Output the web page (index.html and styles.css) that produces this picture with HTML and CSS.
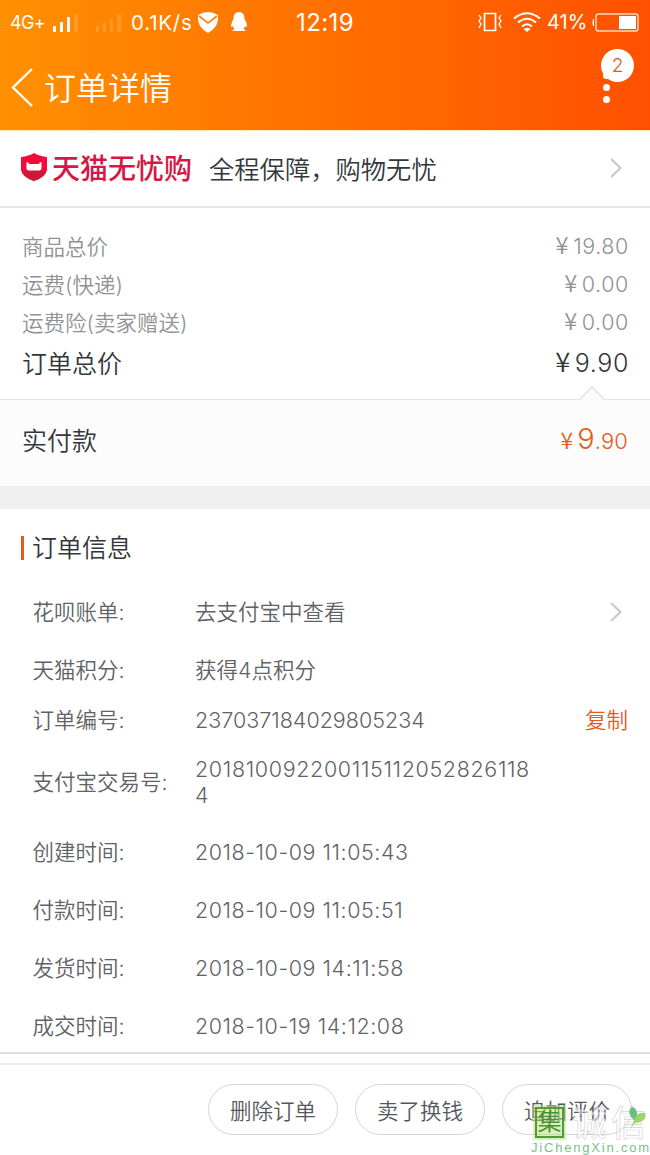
FILE: index.html
```html
<!DOCTYPE html>
<html lang="zh-CN">

<head>
    <meta charset="UTF-8">
    <title>订单详情</title>
    <link rel="stylesheet" href="styles.css">
</head>

<body>
    <div class="header">
        <div class="status-bar">
            <span class="network">4G+</span>
            <svg class="signal" width="68" height="18" viewBox="0 0 68 18" fill="#fff">
                <path d="M0 12h3v6H0zM7 8h3v10H7zM14 3h3v15h-3z" />
                <path d="M21 0h4v18h-4zM43 12h3v6h-3zM50 9h3v9h-3zM57 5h3v13h-3zM64 0h4v18h-4z" opacity="0.15" />
            </svg>
            <span class="speed">0.1K/s</span>
            <svg class="shield" width="20" height="21" viewBox="0 0 20 21">
                <path d="M0 3Q10-3 20 3V8Q19 16 10 21Q1 16 0 8Z" fill="#fff" />
                <path d="M1 4L10 11L19 4" fill="none" stroke="#ff8200" stroke-width="1.6" />
            </svg>
            <svg class="penguin" width="18" height="20" viewBox="0 0 18 20" fill="#fff">
                <path d="M9 0C5 0 3.500 3 3.500 7C2.500 9 1 11 1 14.500Q1.500 15.500 3 14Q3.500 16 4.500 17Q2.500 17.500 2.500 19H15.500Q15.500 17.500 13.500 17Q14.500 16 15 14Q16.500 15.500 17 14.500C17 11 15.500 9 14.500 7C14.500 3 13 0 9 0Z" />
            </svg>
            <span class="clock">12:19</span>
            <svg class="vibrate" width="24" height="20" viewBox="0 0 24 20" fill="none" stroke="#fff" stroke-width="1.7">
                <path d="M6.5 1.5h11v17h-11z" />
                <path d="M1 3l2 3-2 3 2 3-2 4M23 3l-2 3 2 3-2 3 2 4" stroke-width="1.3" />
            </svg>
            <svg class="wifi" width="28" height="20" viewBox="0 0 28 20" fill="none" stroke="#fff" stroke-width="2">
                <path d="M1 6.500Q14-4 27 6.500M5 10.500Q14 3 23 10.500M9 14.500Q14 10 19 14.500" />
                <path d="M14 20l-3.500-3q3.500-2.500 7 0z" fill="#fff" stroke="none" />
            </svg>
            <span class="percent">41%</span>
            <svg class="battery" width="47" height="19" viewBox="0 0 47 19">
                <rect x="4" y="1" width="42" height="17" rx="2.500" fill="none" stroke="#ffd9b8" stroke-width="1.500" />
                <rect x="27" y="3" width="17" height="13" fill="#fff" />
                <path d="M2 6v7H1q-1-3 0-7z" fill="#fff" />
            </svg>
        </div>
        <div class="nav-bar">
            <svg class="back" width="24" height="40" viewBox="0 0 24 40" fill="none" stroke="#fff" stroke-width="2.400">
                <path d="M22 2L3 20.500L22 39" />
            </svg>
            <h1>订单详情</h1>
            <div class="more">
                <span class="dot"></span>
                <span class="dot"></span>
                <span class="dot"></span>
                <span class="badge">2</span>
            </div>
        </div>
    </div>

    <div class="guarantee">
        <svg class="tmall-shield" width="26" height="28" viewBox="0 0 26 28">
            <path d="M13 0Q18 3 26 4V17Q25 24 13 28Q1 24 0 17V4Q8 3 13 0Z" fill="#f5083c" />
            <path d="M1 18H25Q23 25 13 28Q3 25 1 18Z" fill="#cf1738" />
            <path d="M5.500 9Q7 9 8.500 11H17.500Q19 9 20.500 9V15Q20.500 17.500 18 17.500H8Q5.500 17.500 5.500 15Z" fill="#fff" />
        </svg>
        <span class="tmall">天猫无忧购</span>
        <span class="slogan">全程保障，购物无忧</span>
        <svg class="arrow" width="12" height="20" viewBox="0 0 12 20">
            <path d="M1 1L10.500 10L1 19" />
        </svg>
    </div>

    <div class="prices">
        <div class="price-row"><span>商品总价</span><span class="num"><i>¥</i>19.80</span></div>
        <div class="price-row"><span>运费(快递)</span><span class="num"><i>¥</i>0.00</span></div>
        <div class="price-row"><span>运费险(卖家赠送)</span><span class="num"><i>¥</i>0.00</span></div>
        <div class="price-row total"><span>订单总价</span><span class="num"><i>¥</i>9.90</span></div>
    </div>

    <div class="paid">
        <svg class="notch" width="24" height="14" viewBox="0 0 24 14">
            <path d="M0 14L12 1L24 14Z" fill="#fcfcfc" />
            <path d="M0.500 13L12 1L23.500 13" fill="none" stroke="#e2e3e4" stroke-width="1.500" />
        </svg>
        <span>实付款</span>
        <span class="paid-num"><i>¥</i><b>9</b>.90</span>
    </div>

    <div class="gap"></div>

    <div class="order-info">
        <h2>订单信息</h2>
        <div class="info-row">
            <span class="label">花呗账单:</span>
            <span class="value">去支付宝中查看</span>
            <svg class="arrow" width="12" height="20" viewBox="0 0 12 20">
                <path d="M1 1L10.500 10L1 19" />
            </svg>
        </div>
        <div class="info-row">
            <span class="label">天猫积分:</span>
            <span class="value">获得4点积分</span>
        </div>
        <div class="info-row short">
            <span class="label">订单编号:</span>
            <span class="value">237037184029805234</span>
            <a class="copy" href="#">复制</a>
        </div>
        <div class="info-row tall">
            <span class="label">支付宝交易号:</span>
            <span class="value trade-no">2018100922001151120528261184</span>
        </div>
        <div class="info-row">
            <span class="label">创建时间:</span>
            <span class="value time">2018-10-09 11:05:43</span>
        </div>
        <div class="info-row">
            <span class="label">付款时间:</span>
            <span class="value time">2018-10-09 11:05:51</span>
        </div>
        <div class="info-row">
            <span class="label">发货时间:</span>
            <span class="value time">2018-10-09 14:11:58</span>
        </div>
        <div class="info-row">
            <span class="label">成交时间:</span>
            <span class="value time">2018-10-19 14:12:08</span>
        </div>
    </div>

    <div class="footer">
        <button>删除订单</button>
        <button>卖了换钱</button>
        <button>追加评价</button>
        <div class="watermark">
            <div class="mark-top">
                <span class="mark-box">集</span>
                <span class="mark-text">诚信</span>
            </div>
            <div class="mark-url">JiChengXin.com</div>
            <svg class="leaf" width="20" height="22" viewBox="0 0 20 22">
                <path d="M5 12Q-2 4 4 0Q10 2 9 9L7 14Z" fill="#69bf82" />
                <path d="M6 14Q9 4 17 6Q20 14 7 16L2 22Z" fill="#9bd46c" />
            </svg>
        </div>
    </div>
</body>

</html>
```
FILE: styles.css
```css
* {
    box-sizing: border-box;
}

body {
    margin: 0;
    padding: 0;
    width: 650px;
    height: 1155px;
    overflow: hidden;
    background-color: #fff;
    color: #34373a;
    font-family: Inter, "Noto Sans CJK SC", sans-serif;
    font-weight: 350;
    font-size: 21.5px;
}

i {
    font-style: normal;
    font-family: "Noto Sans CJK SC", sans-serif;
}

/* header */
.header {
    height: 130px;
    color: #fff;
    background-image: linear-gradient(to right, #ff9000, #ff5000);
}

.status-bar {
    display: flex;
    align-items: center;
    height: 44px;
    padding-left: 10px;
    white-space: nowrap;
    font-weight: 400;
}

.status-bar svg {
    flex-shrink: 0;
}

.network {
    width: 43px;
    font-size: 18px;
    letter-spacing: -0.6px;
}

.signal {
    margin-top: 1px;
}

.speed {
    width: 67px;
    margin-left: 10px;
    font-size: 20.5px;
    letter-spacing: 0.8px;
}

.penguin {
    margin-left: 12px;
}

.clock {
    width: 60px;
    margin-left: 48px;
    font-size: 24px;
    letter-spacing: 0.4px;
}

.vibrate {
    margin-left: 122px;
}

.wifi {
    margin-left: 11px;
}

.percent {
    width: 41px;
    margin-left: 6px;
    font-size: 20px;
}

.battery {
    margin-left: 4px;
}

.nav-bar {
    display: flex;
    align-items: center;
    height: 86px;
    padding: 0 40px 0 10px;
}

.nav-bar h1 {
    margin: 3px 0 0 10px;
    font-size: 32px;
    font-weight: 350;
    line-height: 40px;
}

.more {
    position: relative;
    display: flex;
    flex-direction: column;
    gap: 5px;
    margin-left: auto;
    margin-top: 1px;
}

.dot {
    width: 7px;
    height: 7px;
    border-radius: 50%;
    background-color: #fff;
}

.badge {
    position: absolute;
    left: -2px;
    top: -23px;
    width: 33px;
    height: 33px;
    border-radius: 50%;
    background-color: #fff;
    color: #d95a20;
    font-size: 19px;
    line-height: 33px;
    text-align: center;
}

/* tmall banner */
.guarantee {
    display: flex;
    align-items: center;
    height: 78px;
    padding: 0 28px 2px 21px;
    border-top: 1px solid #ffe8b8;
    border-bottom: 2px solid #e5e5e5;
}

.tmall-shield {
    margin-top: -1px;
}

.tmall {
    margin-left: 5px;
    margin-top: 2px;
    color: #d81645;
    font-size: 28px;
    font-weight: 500;
    line-height: 36px;
}

.slogan {
    margin-top: 4px;
    margin-left: 17px;
    font-size: 25.3px;
    line-height: 36px;
}

.arrow {
    margin-left: auto;
    fill: none;
    stroke: #c5c7c9;
    stroke-width: 2;
}

/* prices */
.prices {
    height: 191px;
    padding: 20px 22px 0;
}

.price-row {
    display: flex;
    justify-content: space-between;
    height: 38px;
    line-height: 38px;
    color: #909294;
}

.price-row i {
    margin-right: 4px;
    font-size: 1.1em;
    line-height: 1;
}

.num {
    margin-top: -1px;
    margin-right: -1px;
    letter-spacing: 0.6px;
}

.total {
    height: 44px;
    line-height: 44px;
    color: #34373a;
    font-size: 25px;
}

.paid {
    position: relative;
    display: flex;
    justify-content: space-between;
    height: 87px;
    padding: 0 22px;
    border-top: 1px solid #e2e3e4;
    background-color: #fcfcfc;
    font-size: 25px;
    line-height: 82px;
}

.notch {
    position: absolute;
    right: 46px;
    top: -14px;
}

.paid-num {
    margin-top: -2px;
    color: #e85a1c;
    font-size: 22px;
    letter-spacing: 0.1px;
}

.paid-num i {
    margin-right: 4px;
    font-size: 23px;
    line-height: 1;
}

.paid-num b {
    font-size: 29px;
    font-weight: 350;
}

.gap {
    height: 23px;
    background-color: #f0f0f0;
}

/* order info */
.order-info {
    height: 545px;
    border-bottom: 2px solid #dfe0e1;
    color: #606365;
    overflow: hidden;
}

.order-info h2 {
    margin: 27px 0 23px 21px;
    padding-left: 8px;
    border-left: 3px solid #e85a1c;
    color: #34373a;
    font-size: 25px;
    font-weight: 350;
    line-height: 25px;
    height: 24px;
}

.info-row {
    display: flex;
    align-items: center;
    height: 58px;
    padding: 0 28px 0 32.5px;
    line-height: 26px;
}

.info-row.short {
    height: 42px;
    padding-right: 22px;
}

.info-row.tall {
    height: 82px;
}

.label {
    width: 162.5px;
    white-space: nowrap;
}

.time {
    letter-spacing: 0.55px;
}

.trade-no {
    width: 342px;
    letter-spacing: 0.65px;
    word-break: break-all;
}

.copy {
    margin-left: auto;
    color: #e85a1c;
    text-decoration: none;
}

/* footer */
.footer {
    position: relative;
    display: flex;
    justify-content: flex-end;
    gap: 17px;
    height: 92px;
    margin-top: 9px;
    padding: 19px 18px 0 0;
    border-top: 2px solid #ececec;
}

.footer button {
    width: 130px;
    height: 51px;
    padding: 0;
    border: 1px solid #d4d5d6;
    border-radius: 26px;
    background-color: #fff;
    color: #55585a;
    font-family: inherit;
    font-size: 21.5px;
    font-weight: 350;
}

.watermark {
    position: absolute;
    left: 531px;
    top: 42px;
    width: 119px;
}

.mark-top {
    display: flex;
    gap: 8px;
    padding-left: 4px;
}

.mark-box {
    width: 31px;
    height: 31px;
    border: 2px solid #559b35;
    outline: 2px solid rgba(178, 223, 125, 0.5);
    background-color: rgba(178, 223, 125, 0.5);
    color: #4b9233;
    font-size: 24px;
    font-weight: 400;
    line-height: 26px;
    text-align: center;
}

.mark-text {
    color: rgba(255, 255, 255, 0.5);
    font-size: 35px;
    font-weight: 500;
    line-height: 33px;
    letter-spacing: 4px;
    white-space: nowrap;
    -webkit-text-stroke: 0.7px rgba(195, 188, 198, 0.7);
}

.mark-url {
    margin-top: 1px;
    color: #78bf8c;
    font-family: "Liberation Sans", sans-serif;
    font-size: 13px;
    font-weight: 400;
    line-height: 14px;
    letter-spacing: 1.8px;
    white-space: nowrap;
}

.leaf {
    position: absolute;
    left: 97px;
    top: 0;
}
```
